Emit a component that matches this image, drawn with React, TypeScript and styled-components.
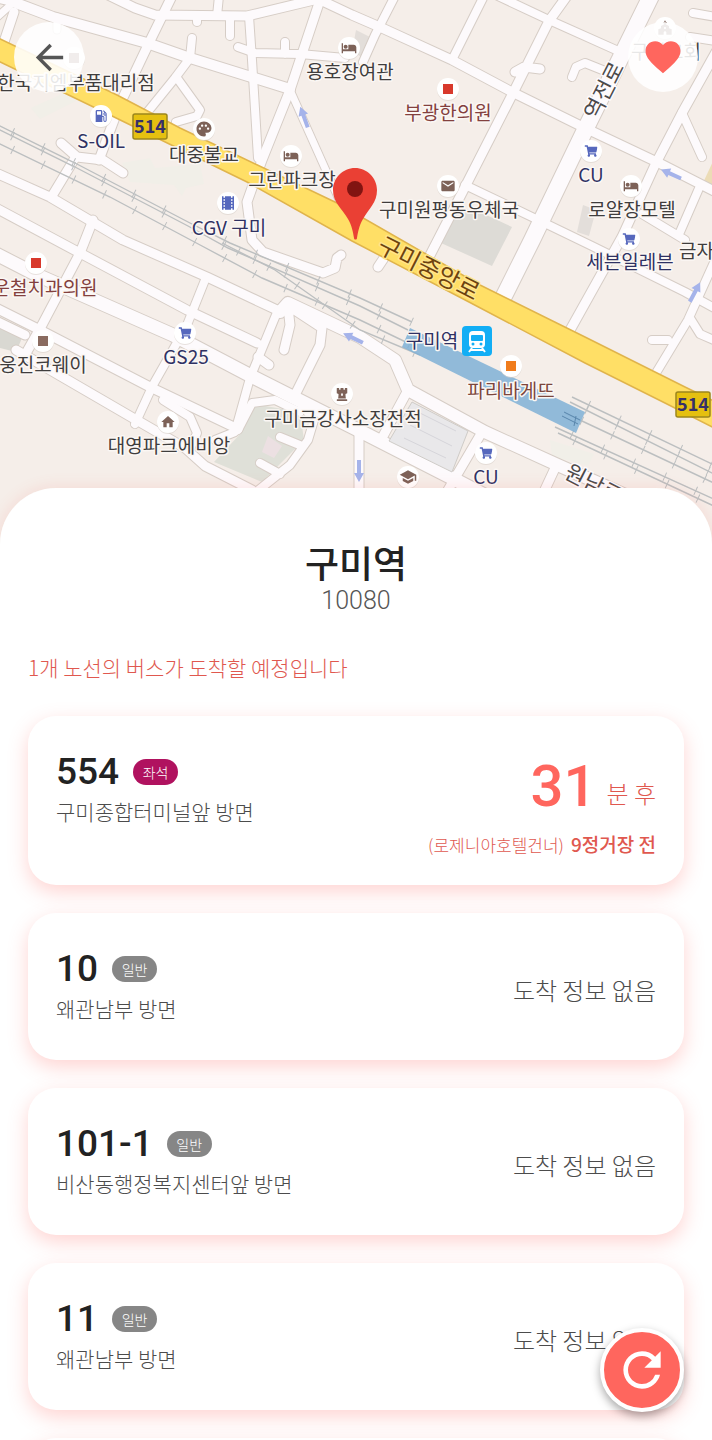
import React from "react";
import styled, { createGlobalStyle } from "styled-components";
import {
  MdArrowBack,
  MdChurch,
  MdFavorite,
  MdHome,
  MdHotel,
  MdLocalGasStation,
  MdMail,
  MdPalette,
  MdRefresh,
  MdSchool,
  MdTheaters,
} from "react-icons/md";
import { FaChessRook, FaShoppingCart } from "react-icons/fa";
import type { IconType } from "react-icons";

const CORAL = "#ff665e";
const FONT = `"Noto Sans CJK KR", "Noto Sans", sans-serif`;
const NUMBER_FONT = `Roboto, "Noto Sans CJK KR", sans-serif`;

const GlobalStyle = createGlobalStyle`
  * { box-sizing: border-box; }
  body {
    margin: 0;
    background: #fff;
    font-family: ${FONT};
    color: #222;
  }
  h1, h2, p, ul { margin: 0; padding: 0; }
  button { border: 0; padding: 0; cursor: pointer; font: inherit; }
`;

const Screen = styled.div`
  position: relative;
  display: flex;
  flex-direction: column;
  height: 100vh;
  overflow: hidden;
`;

const MapArea = styled.div`
  flex: none;
  height: 544px;
  background: #f5eee9;
`;

const MapSvg = styled.svg`
  display: block;
  width: 100%;
  height: 100%;
`;

const TopBar = styled.header`
  position: absolute;
  top: 22px;
  left: 14px;
  right: 14px;
  display: flex;
  justify-content: space-between;
`;

const RoundButton = styled.button<{ $color: string }>`
  display: grid;
  place-items: center;
  width: 70px;
  height: 70px;
  border-radius: 50%;
  background: rgba(255, 255, 255, 0.88);
  color: ${(p) => p.$color};
`;

const Sheet = styled.main`
  position: relative;
  flex: 1;
  min-height: 0;
  margin-top: -56px;
  padding: 52px 28px 28px;
  border-radius: 56px 56px 0 0;
  background: #fff;
  box-shadow: 0 0 16px rgba(255, 102, 94, 0.16);
  overflow-y: auto;
  scrollbar-width: none;
`;

const StopHeader = styled.div`
  display: flex;
  flex-direction: column;
  align-items: center;
`;

const StopName = styled.h1`
  font-size: 37px;
  line-height: 44px;
  font-weight: 500;
`;

const StopCode = styled.p`
  font-family: ${NUMBER_FONT};
  font-size: 25px;
  line-height: 34px;
  font-weight: 300;
  color: #555;
`;

const Notice = styled.p`
  margin-top: 35px;
  font-size: 21px;
  line-height: 28px;
  font-weight: 300;
  color: #e0584f;
`;

const RouteList = styled.ul`
  display: flex;
  flex-direction: column;
  gap: 28px;
  margin-top: 35px;
  list-style: none;
`;

const Card = styled.li`
  display: flex;
  justify-content: space-between;
  gap: 16px;
  min-height: 147px;
  padding: 30px 28px 24px;
  border-radius: 28px;
  background: #fff;
  box-shadow: 0 7px 20px rgba(255, 102, 94, 0.28);
`;

const RouteInfo = styled.div`
  display: flex;
  flex-direction: column;
  padding-top: 3px;
`;

const RouteLine = styled.div`
  display: flex;
  align-items: center;
  gap: 14px;
`;

const RouteNumber = styled.h2`
  font-family: ${NUMBER_FONT};
  font-size: 37px;
  line-height: 46px;
  font-weight: 500;
`;

const Badge = styled.span<{ $color: string }>`
  display: grid;
  place-items: center;
  width: 45px;
  height: 26px;
  border-radius: 13px;
  background: ${(p) => p.$color};
  color: #fff;
  font-size: 14px;
  line-height: 20px;
  font-weight: 300;
`;

const Direction = styled.p`
  font-size: 21px;
  line-height: 32px;
  font-weight: 300;
  color: #4c4c4c;
`;

const Arrival = styled.div`
  display: flex;
  flex-direction: column;
  align-items: flex-end;
  gap: 10px;
  padding-top: 8px;
  color: #e0584f;
`;

const Eta = styled.p`
  display: flex;
  align-items: flex-end;
  gap: 10px;
  font-size: 24px;
  line-height: 50px;
  font-weight: 300;
`;

const EtaMinutes = styled.strong`
  font-family: ${NUMBER_FONT};
  font-size: 58px;
  line-height: 64px;
  font-weight: 500;
  color: ${CORAL};
`;

const Remaining = styled.p`
  display: flex;
  align-items: baseline;
  gap: 7px;
  font-size: 17px;
  line-height: 32px;
  font-weight: 300;
`;

const StopsLeft = styled.strong`
  font-size: 19px;
  font-weight: 500;
`;

const NoArrival = styled.p`
  align-self: center;
  font-size: 24px;
  line-height: 32px;
  font-weight: 300;
  color: #4c4c4c;
`;

const RefreshButton = styled.button`
  position: absolute;
  right: 28px;
  bottom: 28px;
  display: grid;
  place-items: center;
  width: 84px;
  height: 84px;
  border: 4px solid #fff;
  border-radius: 50%;
  background: ${CORAL};
  color: #fff;
  box-shadow: 0 4px 10px rgba(0, 0, 0, 0.35);
`;

/* ---------- map data ---------- */

type Road = { d: string; w: number };

const ROADS: Road[] = [
  { d: "M0 -2L8 0L53 17L147 43L187 57L290 89", w: 10 },
  { d: "M-4 18L14 2", w: 7 },
  { d: "M14 12L4 42", w: 9 },
  { d: "M57 17V30", w: 7 },
  { d: "M172 -4L148 45L119 106M114 120L99 160", w: 9 },
  { d: "M102 -8L135 8L155 15L247 16L318 -1L352 15L382 28L452 60L512 92L585 128L659 163L716 192", w: 9 },
  { d: "M219 -4L217 16M197 16V22M230 16V36", w: 8 },
  { d: "M249 16L252 60L258 158", w: 8 },
  { d: "M238 47L255 53L300 54L345 58M285 42V54", w: 8 },
  { d: "M320 0L290 90L262 160L247 202L252 240L263 252L323 273L335 268L337 258L341 255", w: 9 },
  { d: "M290 90L337 195L350 225", w: 7 },
  { d: "M141 120L175 78L190 58L192 38M177 78L200 110L197 116L176 122", w: 8 },
  { d: "M61 143L77 157L103 160L123 173M75 158L52 196", w: 9 },
  { d: "M-4 173L50 197L123 240L207 277L277 310", w: 9 },
  { d: "M-4 208L80 253L187 310L257 343", w: 9 },
  { d: "M93 220L80 253L42 325L25 355", w: 9 },
  { d: "M-4 254L37 275L173 335L253 377L360 431L450 477L490 498", w: 13 },
  { d: "M-4 308L40 330L150 387L238 429", w: 9 },
  { d: "M-4 321L25 335M16 350L133 418L185 448L205 466L252 490", w: 9 },
  { d: "M205 280L187 325L153 385L135 424", w: 8 },
  { d: "M278 310L250 378L235 432L215 440M238 430L252 403L275 400L300 412", w: 8 },
  { d: "M280 312L288 303L360 337L395 360L408 390L485 432L560 466L650 506", w: 12 },
  { d: "M288 307L290 325L284 350M290 307L322 328L320 345L294 397M258 357L269 365", w: 9 },
  { d: "M300 403L314 420L308 440L290 465L256 492M280 437L302 446M260 463L280 474", w: 8 },
  { d: "M163 400L190 417L197 433L190 449", w: 8 },
  { d: "M359 430V500M408 390L382 438M482 432L448 490M556 466L542 496", w: 9 },
  { d: "M395 -4L375 35L363 62M484 -4L452 60", w: 8 },
  { d: "M498 -4L549 20L625 54", w: 8 },
  { d: "M567 -4L549 21L512 95L465 187L425 265M515 72L524 67L540 69M392 246L378 267", w: 9 },
  { d: "M572 77L576 67L585 63L615 75", w: 8 },
  { d: "M465 185L532 217L592 246L685 292L716 309", w: 8 },
  { d: "M716 52L682 113L655 165L622 237L569 332", w: 9 },
  { d: "M682 113L702 157M693 13L716 17M690 37L716 41M642 214L685 240M700 186L680 232", w: 8 },
  { d: "M716 258L688 320L653 378M652 340L668 340M690 318L700 334L716 341", w: 8 },
  { d: "M652 -6L585 130L532 240L502 300", w: 16 },
];

const RAILS = [
  "M-4 124L75 163L190 223L230 243L360 298L412 322",
  "M-4 128L75 167L188 226L228 248L360 306L408 330",
  "M-4 142L110 197L202 246L262 278L360 320L412 345",
  "M222 243L275 270L360 330L420 355",
  "M572 397L716 466",
  "M570 402L716 475",
  "M565 413L716 484",
  "M555 427L716 500",
  "M558 433L716 507",
];

const ARROWS = [
  { x: 304, y: 117, r: -110 },
  { x: 671, y: 174, r: 204 },
  { x: 353, y: 338, r: 206 },
  { x: 359, y: 471, r: 90 },
  { x: 695, y: 292, r: -62 },
];

type Poi = { x: number; y: number; icon?: IconType; size?: number; color: string };

const BROWN = "#7d6258";
const BLUE = "#5668bd";

const POIS: Poi[] = [
  { x: 101, y: 116, icon: MdLocalGasStation, color: BLUE },
  { x: 204, y: 129, icon: MdPalette, size: 18, color: BROWN },
  { x: 291, y: 156, icon: MdHotel, color: BROWN },
  { x: 349, y: 48, icon: MdHotel, color: BROWN },
  { x: 228, y: 203, icon: MdTheaters, size: 18, color: BLUE },
  { x: 448, y: 89, color: "#d8392c" },
  { x: 448, y: 186, icon: MdMail, color: BROWN },
  { x: 591, y: 151, icon: FaShoppingCart, size: 13, color: BLUE },
  { x: 631, y: 186, icon: MdHotel, color: BROWN },
  { x: 629, y: 239, icon: FaShoppingCart, size: 13, color: BLUE },
  { x: 36, y: 263, color: "#d8392c" },
  { x: 43, y: 341, color: "#8a6b60" },
  { x: 185, y: 333, icon: FaShoppingCart, size: 13, color: BLUE },
  { x: 168, y: 422, icon: MdHome, color: BROWN },
  { x: 342, y: 394, icon: FaChessRook, size: 14, color: BROWN },
  { x: 511, y: 366, color: "#f07c1c" },
  { x: 486, y: 453, icon: FaShoppingCart, size: 13, color: BLUE },
  { x: 408, y: 477, icon: MdSchool, size: 18, color: BROWN },
  { x: 74, y: 58, color: "#8a6b60" },
  { x: 665, y: 28, icon: MdChurch, color: BROWN },
];

const NAVY = "#2f3163";
const RED = "#83403e";

const LABELS: { x: number; y: number; text: string; color?: string }[] = [
  { x: 76, y: 90, text: "한국지엠부품대리점" },
  { x: 101, y: 148, text: "S-OIL", color: NAVY },
  { x: 204, y: 162, text: "대중불교" },
  { x: 229, y: 235, text: "CGV 구미", color: NAVY },
  { x: 292, y: 187, text: "그린파크장" },
  { x: 350, y: 79, text: "용호장여관" },
  { x: 448, y: 120, text: "부광한의원", color: RED },
  { x: 449, y: 217, text: "구미원평동우체국" },
  { x: 591, y: 182, text: "CU", color: NAVY },
  { x: 632, y: 217, text: "로얄장모텔" },
  { x: 630, y: 269, text: "세븐일레븐", color: NAVY },
  { x: 714, y: 258, text: "금자탕집" },
  { x: 45, y: 295, text: "운철치과의원", color: RED },
  { x: 43, y: 372, text: "웅진코웨이" },
  { x: 186, y: 364, text: "GS25", color: NAVY },
  { x: 169, y: 453, text: "대영파크에비앙" },
  { x: 343, y: 426, text: "구미금강사소장전적" },
  { x: 432, y: 348, text: "구미역", color: NAVY },
  { x: 511, y: 398, text: "파리바게뜨", color: "#7c463c" },
  { x: 486, y: 484, text: "CU", color: NAVY },
  { x: 666, y: 59, text: "구미교회" },
];

const MapLabel = styled.text<{ $size?: number }>`
  font-family: ${FONT};
  font-size: ${(p) => p.$size ?? 19}px;
  font-weight: 400;
  text-anchor: middle;
  paint-order: stroke;
  stroke-width: 3px;
  stroke-linejoin: round;
`;

const ShieldText = styled.text`
  font-family: ${FONT};
  font-size: 18px;
  font-weight: 700;
  text-anchor: middle;
  fill: #35306a;
`;

function RouteShield({ x, y }: { x: number; y: number }) {
  return (
    <g transform={`translate(${x} ${y})`}>
      <rect x="-17" y="-12" width="34" height="25" rx="2" fill="#e5c010" stroke="#9c861c" strokeWidth="1.5" />
      <ShieldText y="7">514</ShieldText>
    </g>
  );
}

function PoiMarker({ x, y, icon: Icon, size = 16, color }: Poi) {
  return (
    <g>
      <circle cx={x} cy={y + 1} r="11" fill="#d9d0ca" opacity="0.6" />
      <circle cx={x} cy={y} r="11" fill="#fff" />
      {Icon ? (
        <Icon x={x - size / 2} y={y - size / 2} size={size} color={color} />
      ) : (
        <rect x={x - 5} y={y - 5} width="10" height="10" fill={color} />
      )}
    </g>
  );
}

function StreetMap() {
  return (
    <MapSvg viewBox="0 0 712 544" preserveAspectRatio="xMidYMin slice" role="img" aria-label="구미역 주변 지도">
      <rect width="712" height="544" fill="#f5eee9" />
      <path d="M480 212L512 227L492 266L441 243L458 207Z" fill="#dddbd6" />
      <path d="M583 205L596 210L589 236L577 232Z" fill="#e3deda" />
      <path d="M702 185L716 155V194Z" fill="#ecdcb6" />
      <path d="M356 30L372 38L364 58L352 52Z" fill="#e3deda" />
      <path d="M0 327L22 338L16 352L0 348Z" fill="#d9d8d2" />
      <path d="M254 404L300 412L304 440L262 482L214 462L242 432Z" fill="#dfe0d8" />
      <path d="M268 436L282 446L274 458L262 452Z" fill="#ece0e2" />
      <path d="M31 108L66 92L76 101L40 119ZM122 163L150 158L155 168L200 164L204 184L186 188L182 196L174 185L130 182Z" fill="#f1efe8" />
      <path d="M550 440L594 454L588 466L552 456Z" fill="#f1efe8" />

      <g fill="none" strokeLinejoin="round" strokeLinecap="round" stroke="#d6cdc6">
        {ROADS.map((r) => (
          <path key={r.d} d={r.d} strokeWidth={r.w + 2} />
        ))}
      </g>
      <g fill="none" strokeLinejoin="round" strokeLinecap="round" stroke="#fdfafc">
        {ROADS.map((r) => (
          <path key={r.d} d={r.d} strokeWidth={r.w} />
        ))}
      </g>

      <path d="M412 402L468 431L452 472L389 441Z" fill="#e9e8ea" stroke="#cfccc8" />
      <path d="M418 412L456 431M410 425L452 446M404 438L446 458" stroke="#d6d5da" fill="none" />

      <g fill="none" stroke="#bcbfc0">
        {RAILS.map((d) => (
          <g key={d}>
            <path d={d} strokeWidth="1.4" />
            <path d={d} strokeWidth="9" strokeDasharray="1 33" strokeDashoffset="-18" />
          </g>
        ))}
      </g>

      <path
        d="M-4 37L117 95L180 128L337 203L480 285L585 337L685 387L716 402V429L665 403L585 363L469 302L352 241L247 182L110 115L-4 60Z"
        fill="#ffdf66"
        stroke="#e0b44c"
        strokeWidth="1.5"
      />

      <path d="M410 328L585 412L576 433L402 347Z" fill="#7fb0d6" opacity="0.85" />
      <path d="M564 412L580 420M562 416L578 424M576 416L574 426" stroke="#5a87ad" fill="none" />

      <g fill="#a5b3ea">
        {ARROWS.map((a) => (
          <path
            key={`${a.x}-${a.y}`}
            transform={`translate(${a.x} ${a.y}) rotate(${a.r})`}
            d="M-11 -2H2V-5L11 0L2 5V2H-11Z"
          />
        ))}
      </g>

      {POIS.map((p) => (
        <PoiMarker key={`${p.x}-${p.y}`} {...p} />
      ))}

      {LABELS.map((l) => (
        <MapLabel key={`${l.x}-${l.y}`} x={l.x} y={l.y} fill={l.color ?? "#3f3d3d"} stroke="#fbf7f4">
          {l.text}
        </MapLabel>
      ))}
      <MapLabel $size={24} transform="translate(425 276) rotate(27)" fill="#6d430f" stroke="#ffe58a">
        구미중앙로
      </MapLabel>
      <MapLabel $size={22} transform="translate(611 94) rotate(-63)" fill="#4c4a4a" stroke="#fdfafc">
        역전로
      </MapLabel>
      <MapLabel $size={22} transform="translate(590 491) rotate(27)" fill="#4c4a4a" stroke="#fdfafc">
        원남로
      </MapLabel>

      <RouteShield x={150} y={126} />
      <RouteShield x={693} y={404} />

      <g transform="translate(462 326)">
        <rect width="30" height="30" rx="4" fill="#12aef5" />
        <rect x="7" y="5" width="16" height="17" rx="4" fill="#fff" />
        <rect x="9" y="9" width="12" height="6" rx="1" fill="#12aef5" />
        <circle cx="11" cy="18" r="1.5" fill="#12aef5" />
        <circle cx="19" cy="18" r="1.5" fill="#12aef5" />
        <path d="M10 22L7 26M20 22L23 26M9 24H21" stroke="#fff" strokeWidth="2" fill="none" />
      </g>

      <path
        d="M355 168C343 168 333 178 333 190C333 203 342 208 348 219C352 226 353 232 354 238C354 240 357 240 357 238C358 232 359 226 363 219C369 208 377 203 377 190C377 178 367 168 355 168Z"
        fill="#ea4034"
      />
      <circle cx="355" cy="189" r="8" fill="#811411" />
    </MapSvg>
  );
}

/* ---------- route data ---------- */

type Route = {
  number: string;
  kind: "좌석" | "일반";
  direction: string;
  eta?: { minutes: number; at: string; stops: number };
};

const KIND_COLOR = { 좌석: "#b0125f", 일반: "#868686" };

const ROUTES: Route[] = [
  {
    number: "554",
    kind: "좌석",
    direction: "구미종합터미널앞 방면",
    eta: { minutes: 31, at: "로제니아호텔건너", stops: 9 },
  },
  { number: "10", kind: "일반", direction: "왜관남부 방면" },
  { number: "101-1", kind: "일반", direction: "비산동행정복지센터앞 방면" },
  { number: "11", kind: "일반", direction: "왜관남부 방면" },
  { number: "111", kind: "일반", direction: "왜관남부 방면" },
];

function RouteCard({ route }: { route: Route }) {
  return (
    <Card>
      <RouteInfo>
        <RouteLine>
          <RouteNumber>{route.number}</RouteNumber>
          <Badge $color={KIND_COLOR[route.kind]}>{route.kind}</Badge>
        </RouteLine>
        <Direction>{route.direction}</Direction>
      </RouteInfo>
      {route.eta ? (
        <Arrival>
          <Eta>
            <EtaMinutes>{route.eta.minutes}</EtaMinutes>분 후
          </Eta>
          <Remaining>
            ({route.eta.at})<StopsLeft>{route.eta.stops}정거장 전</StopsLeft>
          </Remaining>
        </Arrival>
      ) : (
        <NoArrival>도착 정보 없음</NoArrival>
      )}
    </Card>
  );
}

export default function App() {
  const arriving = ROUTES.filter((r) => r.eta).length;
  return (
    <>
      <GlobalStyle />
      <Screen>
        <MapArea>
          <StreetMap />
        </MapArea>
        <TopBar>
          <RoundButton $color="#555" aria-label="뒤로">
            <MdArrowBack size={41} />
          </RoundButton>
          <RoundButton $color={CORAL} aria-label="즐겨찾기">
            <MdFavorite size={42} />
          </RoundButton>
        </TopBar>
        <Sheet>
          <StopHeader>
            <StopName>구미역</StopName>
            <StopCode>10080</StopCode>
          </StopHeader>
          <Notice>{`${arriving}개 노선의 버스가 도착할 예정입니다`}</Notice>
          <RouteList>
            {ROUTES.map((r) => (
              <RouteCard key={r.number} route={r} />
            ))}
          </RouteList>
        </Sheet>
        <RefreshButton aria-label="새로고침">
          <MdRefresh size={56} />
        </RefreshButton>
      </Screen>
    </>
  );
}
